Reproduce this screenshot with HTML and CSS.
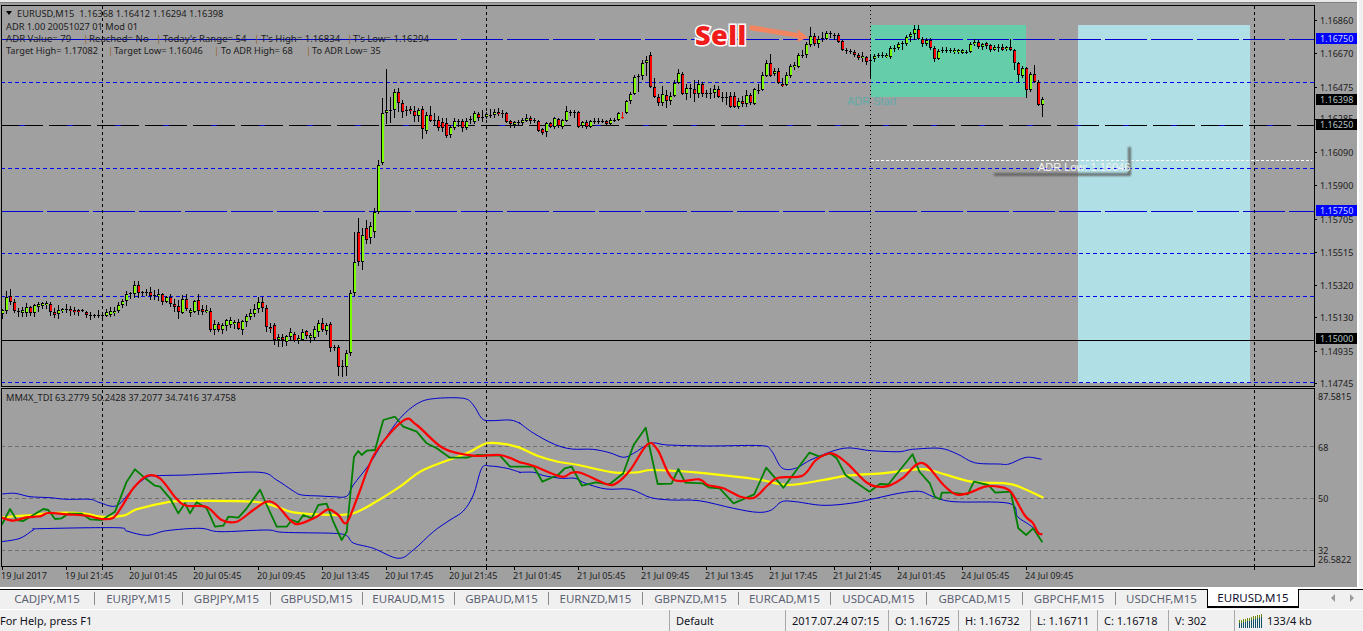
FILE: index.html
```html
<!DOCTYPE html>
<html lang="en">
<head>
<meta charset="utf-8">
<title>EURUSD,M15</title>
<link rel="stylesheet" href="styles.css">
</head>
<body>
<main class="workspace">
<svg class="chart" width="1357" height="587" viewBox="0 0 1357 587" xmlns="http://www.w3.org/2000/svg">
  <rect class="top-band" x="0" y="0" width="1357" height="2"/>
  <line class="top-edge" x1="0" y1="2.5" x2="1357" y2="2.5"/>

  <rect class="zone-green" x="871" y="25" width="155" height="72"/>
  <rect class="zone-blue" x="1078" y="25" width="172" height="358"/>

  <g class="levels">
    <line class="lv-blue-long" x1="1" y1="39.5" x2="1314" y2="39.5"/>
    <line class="lv-blue-solid" x1="1" y1="39.5" x2="430" y2="39.5"/>
    <line class="lv-blue-long" x1="1" y1="211.5" x2="1314" y2="211.5"/>
    <line class="lv-blue-mix" x1="1" y1="125.5" x2="1314" y2="125.5"/>
    <line class="lv-black-long" x1="1" y1="125.5" x2="1314" y2="125.5"/>
    <line class="lv-black" x1="1" y1="340.5" x2="1314" y2="340.5"/>
    <line class="lv-blue-short" x1="1" y1="82.5" x2="1314" y2="82.5"/>
    <line class="lv-blue-short" x1="1" y1="168.5" x2="1314" y2="168.5"/>
    <line class="lv-blue-short" x1="1" y1="253.5" x2="1314" y2="253.5"/>
    <line class="lv-blue-short" x1="1" y1="296.5" x2="1314" y2="296.5"/>
    <line class="lv-blue-short" x1="1" y1="382.5" x2="1314" y2="382.5"/>
    <line class="lv-white" x1="871" y1="160.5" x2="1312" y2="160.5"/>
    <line class="lv-grey" x1="1" y1="446.5" x2="1314" y2="446.5"/>
    <line class="lv-grey" x1="1" y1="498.5" x2="1314" y2="498.5"/>
    <line class="lv-grey" x1="1" y1="550.5" x2="1314" y2="550.5"/>
    <line class="v-dash" x1="102.5" y1="6" x2="102.5" y2="566"/>
    <line class="v-dash" x1="486.5" y1="6" x2="486.5" y2="566"/>
    <line class="v-dash" x1="1254.5" y1="6" x2="1254.5" y2="566"/>
    <line class="v-dot" x1="870.5" y1="6" x2="870.5" y2="566"/>
  </g>

  <polyline class="label-shadow" points="994,174.5 1129.500,174.500 1129.500,147"/>
  <text class="obj-text obj-white" x="1038" y="171">ADR Low: 1.16046</text>
  <text class="obj-text obj-teal" x="847" y="105">ADR Start</text>

  <g id="candles" class="candles"></g>
  <g id="indicator"></g>

  <g class="frame">
    <rect x="1.5" y="5.5" width="1313" height="381"/>
    <rect x="1.5" y="388.5" width="1313" height="178"/>
  </g>

  <g class="sell-mark">
    <path class="sell-arrow" d="M750 25 L798 33 L797 29 L808 37.500 L797 42 L798 38 L749 30 Z"/>
    <text class="sell-text" x="695" y="45">Sell</text>
  </g>

  <g class="info">
    <path class="menu-tri" d="M6 11 H12 L9 15 Z"/>
    <text x="17" y="16.500" class="info-wide">EURUSD,M15&#160; 1.16368 1.16412 1.16294 1.16398</text>
    <text x="6" y="29.500" class="info-wide">ADR 1.00 20051027 01 Mod 01</text>
    <text y="41.500" class="info-row"><tspan x="6">ADR Value= 79</tspan><tspan class="pipe" x="83">|</tspan><tspan x="89">Reached= No</tspan><tspan class="pipe" x="156">|</tspan><tspan x="163">Today's Range= 54</tspan><tspan class="pipe" x="254">|</tspan><tspan x="261">T's High= 1.16834</tspan><tspan class="pipe" x="347">|</tspan><tspan x="353">T's Low= 1.16294</tspan></text>
    <text y="53.500" class="info-row-tight"><tspan x="6">Target High= 1.17082</tspan><tspan class="pipe" x="108">|</tspan><tspan x="114">Target Low= 1.16046</tspan><tspan class="pipe" x="214">|</tspan><tspan x="221">To ADR High= 68</tspan><tspan class="pipe" x="306">|</tspan><tspan x="312">To ADR Low= 35</tspan></text>
    <text x="6" y="400.500" class="info-wide">MM4X_TDI 63.2779 50.2428 37.2077 34.7416 37.4758</text>
  </g>

  <path class="ticks" d="M1314 20.500h3M1314 53.500h3M1314 87.500h3M1314 119.500h3M1314 152.500h3M1314 185.500h3M1314 219.500h3M1314 252.500h3M1314 285.500h3M1314 317.500h3M1314 351.500h3M1314 383.500h3M2.500 566v4M66.500 566v4M130.500 566v4M194.500 566v4M258.500 566v4M322.500 566v4M386.500 566v4M450.500 566v4M514.500 566v4M578.500 566v4M642.500 566v4M706.500 566v4M770.500 566v4M834.500 566v4M898.500 566v4M962.500 566v4M1026.500 566v4M102.500 566v4M486.500 566v4M870.500 566v4M1254.500 566v4"/>

  <g class="axis">
    <text x="1320" y="24">1.16860</text>
    <text x="1320" y="57">1.16670</text>
    <text x="1320" y="90.500">1.16475</text>
    <text x="1320" y="122">1.16285</text>
    <text x="1320" y="156">1.16090</text>
    <text x="1320" y="189">1.15900</text>
    <text x="1320" y="222.500">1.15705</text>
    <text x="1320" y="255.500">1.15515</text>
    <text x="1320" y="288.500">1.15320</text>
    <text x="1320" y="321">1.15130</text>
    <text x="1320" y="354.500">1.14935</text>
    <text x="1320" y="387">1.14745</text>
    <text x="1318" y="399.500">87.5815</text>
    <text x="1318" y="450.500">68</text>
    <text x="1318" y="502">50</text>
    <text x="1318" y="554">32</text>
    <text x="1318" y="563">26.5822</text>
  </g>
  <g class="axis-tags">
    <rect class="tag-blue" x="1316" y="33" width="41" height="11"/>
    <text class="tag-text-blue" x="1320" y="42">1.16750</text>
    <rect class="tag-black" x="1316" y="94" width="41" height="11"/>
    <text class="tag-text-black" x="1320" y="103">1.16398</text>
    <rect class="tag-black" x="1316" y="119" width="41" height="11"/>
    <text class="tag-text-black" x="1320" y="128">1.16250</text>
    <rect class="tag-blue" x="1316" y="205" width="41" height="11"/>
    <text class="tag-text-blue" x="1320" y="214">1.15750</text>
    <rect class="tag-black" x="1316" y="333" width="41" height="11"/>
    <text class="tag-text-black" x="1320" y="342">1.15000</text>
  </g>

  <g class="time">
    <text x="1" y="579">19 Jul 2017</text>
    <text x="65" y="579">19 Jul 21:45</text>
    <text x="129" y="579">20 Jul 01:45</text>
    <text x="193" y="579">20 Jul 05:45</text>
    <text x="257" y="579">20 Jul 09:45</text>
    <text x="321" y="579">20 Jul 13:45</text>
    <text x="385" y="579">20 Jul 17:45</text>
    <text x="449" y="579">20 Jul 21:45</text>
    <text x="513" y="579">21 Jul 01:45</text>
    <text x="577" y="579">21 Jul 05:45</text>
    <text x="641" y="579">21 Jul 09:45</text>
    <text x="705" y="579">21 Jul 13:45</text>
    <text x="769" y="579">21 Jul 17:45</text>
    <text x="833" y="579">21 Jul 21:45</text>
    <text x="897" y="579">24 Jul 01:45</text>
    <text x="961" y="579">24 Jul 05:45</text>
    <text x="1025" y="579">24 Jul 09:45</text>
  </g>
</svg>
</main>

<nav class="tabs">
  <span class="tab">CADJPY,M15</span>
  <span class="tab">EURJPY,M15</span>
  <span class="tab">GBPJPY,M15</span>
  <span class="tab">GBPUSD,M15</span>
  <span class="tab">EURAUD,M15</span>
  <span class="tab">GBPAUD,M15</span>
  <span class="tab">EURNZD,M15</span>
  <span class="tab">GBPNZD,M15</span>
  <span class="tab">EURCAD,M15</span>
  <span class="tab">USDCAD,M15</span>
  <span class="tab">GBPCAD,M15</span>
  <span class="tab">GBPCHF,M15</span>
  <span class="tab tab-last">USDCHF,M15</span>
  <span class="tab tab-active">EURUSD,M15</span>
  <span class="scroll">
    <i class="arrow arrow-left"></i>
    <i class="arrow arrow-right"></i>
  </span>
</nav>

<footer class="status">
  <span class="cell cell-help">For Help, press F1</span>
  <span class="cell">Default</span>
  <span class="cell">2017.07.24 07:15</span>
  <span class="cell">O: 1.16725</span>
  <span class="cell">H: 1.16732</span>
  <span class="cell">L: 1.16711</span>
  <span class="cell">C: 1.16718</span>
  <span class="cell">V: 302</span>
  <span class="cell cell-traffic">
    <svg class="traffic" width="24" height="14" viewBox="0 0 24 14" xmlns="http://www.w3.org/2000/svg">
      <path class="traffic-top" d="M.5 6v3M2.500 6v3M4.500 5v3M6.500 5v3M8.500 4v3M10.500 4v3M12.500 3v3M14.500 2v3M16.500 2v3M18.500 1v3M20.500 1v3M22.500 0v3"/>
      <path class="traffic-low" d="M.5 9v5M2.500 9v5M4.500 8v6M6.500 8v6M8.500 7v7M10.500 7v7M12.500 6v8M14.500 5v9M16.500 5v9M18.500 4v10M20.500 4v10M22.500 3v11"/>
    </svg>
    133/4 kb
  </span>
</footer>
<script src="script.js"></script>
</body>
</html>
```
FILE: styles.css
```css
* { box-sizing: border-box; }
html, body { margin: 0; padding: 0; }
body {
  width: 1363px;
  height: 631px;
  overflow: hidden;
  background: #f0f0f0;
  display: flex;
  flex-direction: column;
  font-family: "Noto Sans", "Open Sans", sans-serif;
}

.workspace {
  height: 587px;
  flex: none;
  display: flex;
}
.chart {
  display: block;
  background: #a0a0a0;
  flex: none;
}
.workspace::after {
  content: "";
  width: 6px;
  border-left: 2px solid #ffffff;
}
.top-band { fill: #e8e8e8; }
.top-edge { stroke: #808080; stroke-width: 1; }

.zone-green { fill: #66cdaa; }
.zone-blue { fill: #b0e0e6; }

.levels line { stroke-width: 1; fill: none; }
.lv-blue-solid { stroke: #0000d2; }
.lv-blue-long { stroke: #0000d2; stroke-dasharray: 42 4; }
.lv-blue-mix { stroke: #0000d2; stroke-dasharray: 8 40; stroke-dashoffset: -16; }
.lv-black-long { stroke: #000000; stroke-dasharray: 18 6; }
.lv-black { stroke: #000000; }
.lv-blue-short { stroke: #0000ff; stroke-dasharray: 4 3; }
.lv-white { stroke: #ffffff; stroke-dasharray: 3 2; }
.lv-grey { stroke: #6e6e6e; stroke-dasharray: 4 3; }
.v-dash { stroke: #000000; stroke-dasharray: 3 3; }
.v-dot { stroke: #000000; stroke-dasharray: 1 3; }

.label-shadow {
  fill: none;
  stroke: #5a5a5a;
  stroke-width: 2.5;
  filter: blur(1px);
}
.obj-text { font-family: "Liberation Sans", sans-serif; font-size: 11px; }
.obj-white { fill: #f4f4f4; }
.obj-teal { fill: #60aaaa; }

.candles { shape-rendering: crispEdges; }
.wick { stroke: #000000; stroke-width: 1; }
.wick-red { stroke: #ff0000; }
.body-edge { fill: #000000; }
.body-up { fill: #7cfc00; }
.body-down { fill: #ff0000; }

.band { fill: none; stroke: #0000d2; stroke-width: 1; stroke-linejoin: round; }
.tdi-yellow { fill: none; stroke: #ffff00; stroke-width: 2.2; stroke-linejoin: round; }
.tdi-green { fill: none; stroke: #008000; stroke-width: 1.8; stroke-linejoin: round; }
.tdi-red { fill: none; stroke: #ff0000; stroke-width: 2.2; stroke-linejoin: round; }

.frame rect { fill: none; stroke: #000000; stroke-width: 1; }
.ticks { stroke: #000000; stroke-width: 1; fill: none; }

.sell-arrow { fill: #f28560; }
.sell-text {
  font-family: "Open Sans", sans-serif;
  font-weight: 800;
  font-size: 27px;
  letter-spacing: 0.5px;
  fill: #f01c1c;
  stroke: #ffffff;
  stroke-width: 3px;
  paint-order: stroke;
}

.info text, .axis text, .axis-tags text, .time text {
  font-family: "Noto Sans", sans-serif;
  font-size: 9px;
  fill: #1c1c1c;
}
.info .info-wide { font-size: 9.25px; }
.info .info-row { font-size: 9.6px; }
.info .info-row-tight { font-size: 9.2px; }
.info .pipe { fill: #96642a; }
.menu-tri { fill: #000000; }
.tag-blue { fill: #0000ff; }
.tag-black { fill: #000000; }
.axis-tags .tag-text-blue { fill: #c8dcff; }
.axis-tags .tag-text-black { fill: #b4c4c8; }

.tabs {
  height: 22px;
  flex: none;
  display: grid;
  grid-template-columns: 95px 88px 88px 92px 92px 94px 94px 96px 92px 96px 96px 93px 91px 92px 1fr;
  align-items: start;
  background: #f0f0f0;
  border-top: 2px solid #ffffff;
  box-shadow: inset 0 1px 0 #000000;
  font-size: 11.5px;
}
.tab {
  height: 13px;
  margin-top: 3px;
  display: flex;
  align-items: center;
  justify-content: center;
  color: #5c6272;
  border-right: 1px solid #8a8a8a;
  white-space: nowrap;
}
.tab-last { border-right: 0; }
.tab-active {
  margin-top: 0;
  height: 19px;
  color: #101030;
  background: #ffffff;
  border: 1px solid #000000;
  border-top: 0;
  border-bottom-width: 2px;
}
.scroll {
  height: 18px;
  display: flex;
  align-items: center;
  justify-content: flex-end;
  gap: 15px;
  padding-right: 9px;
}
.arrow {
  display: block;
  width: 0;
  height: 0;
  border-top: 4px solid transparent;
  border-bottom: 4px solid transparent;
}
.arrow-left { border-right: 4px solid #9a9a9a; }
.arrow-right { border-left: 4px solid #9a9a9a; }

.status {
  height: 22px;
  flex: none;
  display: grid;
  grid-template-columns: 669px 116px 103px 70px 72px 67px 71px 66px 1fr;
  font-size: 11px;
  color: #101020;
  background: #f0f0f0;
  border-top: 1px solid #ffffff;
  align-items: stretch;
}
.cell {
  display: flex;
  align-items: center;
  padding-left: 6px;
  border-left: 1px solid #a8a8a8;
  white-space: nowrap;
}
.cell-help { padding-left: 0; border-left: 0; }
.cell-traffic { padding-left: 4px; }
.traffic { margin-right: 4px; flex: none; }
.traffic-top { stroke: #6f8a12; stroke-width: 1; fill: none; }
.traffic-low { stroke: #0f4f66; stroke-width: 1; fill: none; }
```
FILE: script.js
```js
// Each bar: [body top, body bottom, 1 = up / 0 = down, high?, low?] in chart pixels.
var bars = [
[310,314,1],[297,311,1,291],[296,302,0,289],[302,311,0],[311,312,1],[310,313,1],[307,313,1],[307,313,0],[305,313,1],[304,307,1],[303,306,1],[303,305,1],[304,312,0],[312,315,0],[310,314,1],[309,311,1],[309,310,1],[309,311,0],[310,312,0],[310,312,0],
[310,311,1],[312,315,0],[315,316,1],[315,316,1],[315,316,1],[315,316,1],[312,316,1],[311,315,1],[311,313,1],[305,311,1],[301,305,1],[294,301,1],[293,294,1],[285,294,1],[285,293,0],[292,293,1],[292,293,1],[292,296,0],[295,296,1],[294,296,1],
[294,302,0],[297,302,1],[297,304,0],[304,307,0],[306,312,0,300,319],[299,313,1],[299,309,0],[310,313,1],[301,312,1],[300,311,0,294],[309,312,0],[310,312,1],[311,330,0],[324,330,1],[324,330,0],[325,330,1],[320,326,1],[320,325,1],[322,324,1],[322,329,0],
[321,330,1],[316,322,1],[313,317,1],[309,314,1],[302,309,1,297],[302,308,0],[308,327,0],[327,329,0],[325,340,0],[337,340,1,334,347],[337,340,0,334,347],[336,342,1],[332,337,1],[334,341,0],[338,340,1],[332,340,1],[331,336,0],[335,338,1],[329,338,1],[323,332,1],
[323,330,0,318],[325,331,1],[324,348,0,322],[347,348,1,345],[347,367,0,345,376],[366,367,1,360,377],[353,367,1,350,376],[293,353,1,290,356],[262,293,1,232,296],[232,262,0,218],[235,262,1,228,270],[228,240,0,220],[226,238,1,222,244],[212,232,1,208,238],[165,212,1,160,214],[113,163,1,98,165],[110,113,1,69,124],[110,111,1,97,123],[92,110,1,89,118],[92,103,0,88,112],
[103,112,0,100,118],[110,111,1,106,116],[109,111,0,106,114],[111,116,0,106,122],[110,116,1,108,122],[109,129,0,106,139],[115,131,1,112,134],[115,121,0,106,122],[120,121,1,113,126],[120,128,0,116,131],[122,128,0,118,132],[123,136,0,118,138],[127,135,1,125,138],[121,128,1,118,130],[121,122,1,119,127],[121,128,0,119,132],[121,128,1,118,130],[119,120,1,116,124],[113,122,1,111,124],[114,118,0,112,121],
[117,118,1,110,122],[114,117,1,112,119],[115,116,1,109,118],[112,115,1,109,118],[112,114,0,108,116],[113,114,1,110,118],[113,122,0,112,123],[121,124,0,120,128],[122,125,1,121,128],[122,123,1,120,125],[120,123,1,118,125],[118,121,1,114,122],[118,121,0,116,124],[120,121,1,118,123],[121,131,0,120,132],[129,133,0,128,135],[123,132,1,122,137],[123,127,0,122,128],[118,127,1,117,129],[119,126,0,118,128],
[120,127,1,119,129],[111,121,1,106,122],[112,113,1,110,116],[112,113,1,110,118],[112,127,0,111,128],[122,126,1,121,128],[122,127,0,120,129],[121,127,1,120,128],[121,122,1,118,124],[121,122,1,118,124],[121,122,1,119,123],[121,124,0,120,126],[120,124,1,118,126],[120,121,1,118,122],[113,120,1,112,121],[117,118,0,112,119],[101,113,1,100,114],[94,101,1,92,104],[77,94,1,75,95],[76,77,1,74,92],
[63,76,1,60,80],[60,63,1,56,76],[55,87,0,52,88],[87,97,0,78,98],[97,103,0,94,106],[94,103,1,86,106],[95,101,0,90,108],[96,101,1,92,105],[83,96,1,80,97],[73,83,1,69,84],[74,94,0,72,95],[88,94,1,84,100],[88,89,1,84,98],[89,94,0,80,102],[84,94,1,80,98],[84,94,0,82,97],[93,94,1,90,98],[93,94,1,88,99],[89,93,1,85,98],[89,97,0,86,98],
[97,98,1,92,102],[97,98,1,92,105],[96,107,0,92,108],[96,107,0,92,108],[101,107,1,98,109],[101,104,0,96,107],[95,104,1,90,107],[95,103,0,93,105],[89,104,1,88,105],[90,91,1,84,94],[75,90,1,72,91],[63,76,1,60,77],[63,76,0,54,77],[71,74,1,68,76],[71,83,0,68,84],[84,86,0,78,87],[75,85,1,72,86],[66,76,1,64,78],[65,67,1,62,70],[55,67,1,53,68],
[55,56,1,50,58],[44,55,1,42,58],[36,45,1,27,47],[36,44,0,33,46],[39,44,1,36,48],[38,39,1,32,42],[33,39,1,31,40],[33,34,1,31,38],[35,36,1,33,40],[35,42,0,33,43],[41,50,0,40,51],[50,51,1,48,54],[51,52,1,49,54],[52,55,0,50,57],[55,58,0,53,60],[56,58,1,52,62],[57,62,0,56,65],[60,61,0,55,78],[56,59,1,54,62],[55,56,1,53,58],
[55,56,1,52,58],[55,57,1,53,58],[48,57,1,46,59],[48,49,1,45,52],[44,48,1,42,50],[43,44,1,41,50],[37,44,1,35,46],[34,37,1,32,42],[29,34,1,25,40],[29,39,0,25,40],[39,44,0,37,47],[40,44,1,38,46],[40,48,0,38,50],[48,59,0,46,62],[51,59,1,49,60],[50,51,1,47,53],[50,51,1,47,53],[50,51,0,48,53],[50,52,1,48,54],[50,52,1,49,54],
[50,53,1,49,54],[52,53,1,50,54],[44,52,1,42,53],[42,44,1,39,46],[42,47,0,40,49],[44,47,1,43,50],[43,46,0,42,49],[45,50,0,44,52],[47,50,1,45,51],[47,48,1,44,52],[47,50,0,44,51],[47,49,1,46,51],[47,50,0,39,51],[50,63,0,49,70],[63,75,0,62,82],[68,76,1,66,78],[68,90,0,67,98],[74,90,1,72,92],[74,82,0,65,83],[82,105,0,80,106],
[99,105,1,97,117]
];

var SVG_NS = "http://www.w3.org/2000/svg";

function el(parent, name, attrs) {
  var node = document.createElementNS(SVG_NS, name);
  for (var key in attrs) node.setAttribute(key, attrs[key]);
  parent.appendChild(node);
  return node;
}

var seed = 17;
function nextWick() {
  seed = (seed * 137 + 59) % 1009;
  return 1 + seed % 5;
}

var candles = document.getElementById("candles");
bars.forEach(function (bar, i) {
  var top = bar[0], bottom = bar[1], up = bar[2];
  var high = bar[3] !== undefined ? bar[3] : top - nextWick();
  var low = bar[4] !== undefined ? bar[4] : bottom + nextWick();
  var left = 1 + 4 * i;
  var doji = bottom - top <= 1;
  var thinRed = (i === 155);
  el(candles, "line", {
    "class": thinRed ? "wick wick-red" : "wick",
    x1: left + 1.5, x2: left + 1.5, y1: high, y2: low
  });
  if (thinRed) {
    el(candles, "rect", { "class": "body-down", x: left, y: top, width: 3, height: 1 });
    return;
  }
  el(candles, "rect", { "class": "body-edge", x: left, y: top, width: 3, height: Math.max(1, bottom - top) });
  if (!doji) {
    el(candles, "rect", {
      "class": up ? "body-up" : "body-down",
      x: left + 1, y: top + 1, width: 2, height: Math.max(1, bottom - top - 2)
    });
  }
});

// Points read as [x, y] in crops of the chart; they are placed in chart pixels here.
function merge(a, b) {
  var out = [];
  a.forEach(function (p) { out.push([p[0] / 3, 385 + p[1] / 3]); });
  b.forEach(function (p) { out.push([520 + p[0] / 2.904, 385 + p[1] / 3]); });
  return out;
}

function sharpPath(pts) {
  return "M" + pts.map(function (p) { return p[0].toFixed(1) + " " + p[1].toFixed(1); }).join("L");
}

// Catmull-Rom through every point, for the smoothed lines.
function smoothPath(pts) {
  var d = "M" + pts[0][0].toFixed(1) + " " + pts[0][1].toFixed(1);
  for (var i = 0; i < pts.length - 1; i++) {
    var p0 = pts[Math.max(0, i - 1)], p1 = pts[i], p2 = pts[i + 1], p3 = pts[Math.min(pts.length - 1, i + 2)];
    d += "C" + (p1[0] + (p2[0] - p0[0]) / 6).toFixed(1) + " " + (p1[1] + (p2[1] - p0[1]) / 6).toFixed(1) +
         " " + (p2[0] - (p3[0] - p1[0]) / 6).toFixed(1) + " " + (p2[1] - (p3[1] - p1[1]) / 6).toFixed(1) +
         " " + p2[0].toFixed(1) + " " + p2[1].toFixed(1);
  }
  return d;
}

var series = [
 ["band",
  [[5,327],[45,325],[90,335],[150,338],[200,343],[270,343],[300,353],[350,362],[400,310],[440,277],[470,272],[560,270],[620,267],[780,262],[830,285],[880,318],[905,330],[960,333],[1000,335],[1040,334],[1060,300],[1110,235],[1150,170],[1200,100],[1250,57],[1300,41],[1390,40],[1420,60],[1445,100],[1470,107],[1530,105],[1560,115]],
  [[0,115],[40,145],[100,178],[150,192],[210,193],[260,203],[300,217],[330,205],[380,175],[430,180],[550,183],[700,182],[730,197],[760,248],[800,250],[850,222],[940,190],[1020,197],[1100,200],[1140,193],[1220,190],[1270,207],[1320,233],[1390,237],[1420,237],[1470,217],[1515,223]]],
 ["band",
  [[5,470],[60,460],[100,435],[120,431],[350,428],[380,438],[440,451],[500,437],[600,430],[660,440],[800,435],[850,442],[1000,445],[1040,452],[1060,474],[1120,490],[1195,520],[1240,495],[1300,440],[1350,405],[1390,378],[1420,330],[1445,250],[1470,243],[1520,250],[1560,262]],
  [[0,262],[40,262],[70,272],[120,280],[160,280],[190,295],[250,312],[320,313],[380,338],[440,345],[520,347],[620,370],[690,382],[730,375],[760,350],[800,350],[880,361],[960,355],[1020,343],[1100,325],[1160,319],[1200,335],[1260,350],[1420,355],[1445,395],[1480,420],[1515,450]]],
 ["tdi-yellow",
  [[5,398],[50,393],[100,390],[150,384],[250,385],[300,395],[370,392],[410,373],[500,352],[560,348],[760,350],[830,365],[880,382],[1000,390],[1060,385],[1120,355],[1200,305],[1270,255],[1400,205],[1460,175],[1520,178],[1560,188]],
  [[0,188],[50,212],[110,230],[170,240],[270,262],[340,262],[385,255],[510,262],[600,272],[700,285],[780,300],[880,285],[950,272],[1050,265],[1150,253],[1200,258],[1310,290],[1410,295],[1450,305],[1520,338]]],
 ["tdi-green",
  [[5,420],[30,372],[50,405],[70,408],[130,372],[145,375],[165,402],[185,400],[205,386],[245,386],[270,403],[305,405],[345,380],[380,290],[405,253],[430,275],[465,302],[480,305],[510,340],[535,385],[555,355],[570,385],[590,352],[620,370],[645,425],[670,422],[685,395],[715,398],[740,370],[780,314],[800,360],[830,425],[860,425],[875,405],[895,412],[910,390],[935,400],[955,360],[980,356],[1000,410],[1025,465],[1040,440],[1062,215],[1075,198],[1085,210],[1100,197],[1125,195],[1150,105],[1185,95],[1210,125],[1250,140],[1280,175],[1310,190],[1350,218],[1400,218],[1430,210],[1500,212],[1530,245],[1560,245]],
  [[0,245],[40,245],[65,290],[110,270],[130,250],[150,245],[180,302],[220,292],[260,298],[300,265],[330,180],[365,128],[380,205],[400,297],[440,296],[460,252],[480,293],[530,295],[550,308],[580,310],[620,355],[680,328],[715,248],[765,308],[840,203],[870,215],[900,205],[920,220],[945,270],[1000,310],[1015,320],[1045,297],[1070,298],[1140,208],[1160,260],[1190,295],[1205,335],[1220,343],[1225,323],[1250,323],[1300,328],[1318,290],[1360,300],[1380,323],[1425,320],[1447,430],[1470,450],[1490,430],[1517,472]]],
 ["tdi-red",
  [[5,398],[40,407],[80,397],[120,394],[145,384],[200,388],[260,392],[305,402],[340,398],[365,365],[400,310],[440,273],[480,280],[530,342],[560,362],[620,366],[665,405],[710,410],[760,375],[800,350],[830,360],[875,410],[900,416],[950,395],[985,373],[1015,390],[1040,413],[1075,330],[1125,205],[1210,107],[1250,120],[1330,190],[1420,212],[1500,210],[1560,232]],
  [[0,232],[40,243],[120,275],[150,263],[180,265],[250,297],[280,295],[320,255],[370,178],[400,195],[445,283],[520,283],[545,300],[590,310],[640,335],[680,338],[720,300],[750,278],[820,272],[860,225],[905,205],[950,235],[1010,295],[1060,305],[1110,280],[1150,240],[1180,240],[1230,300],[1265,328],[1300,325],[1350,305],[1390,305],[1425,320],[1465,390],[1490,415],[1505,445],[1517,447]]]
];

var indicator = document.getElementById("indicator");
series.forEach(function (s) {
  var pts = merge(s[1], s[2]);
  el(indicator, "path", { "class": s[0], d: s[0] === "tdi-green" ? sharpPath(pts) : smoothPath(pts) });
});
```
